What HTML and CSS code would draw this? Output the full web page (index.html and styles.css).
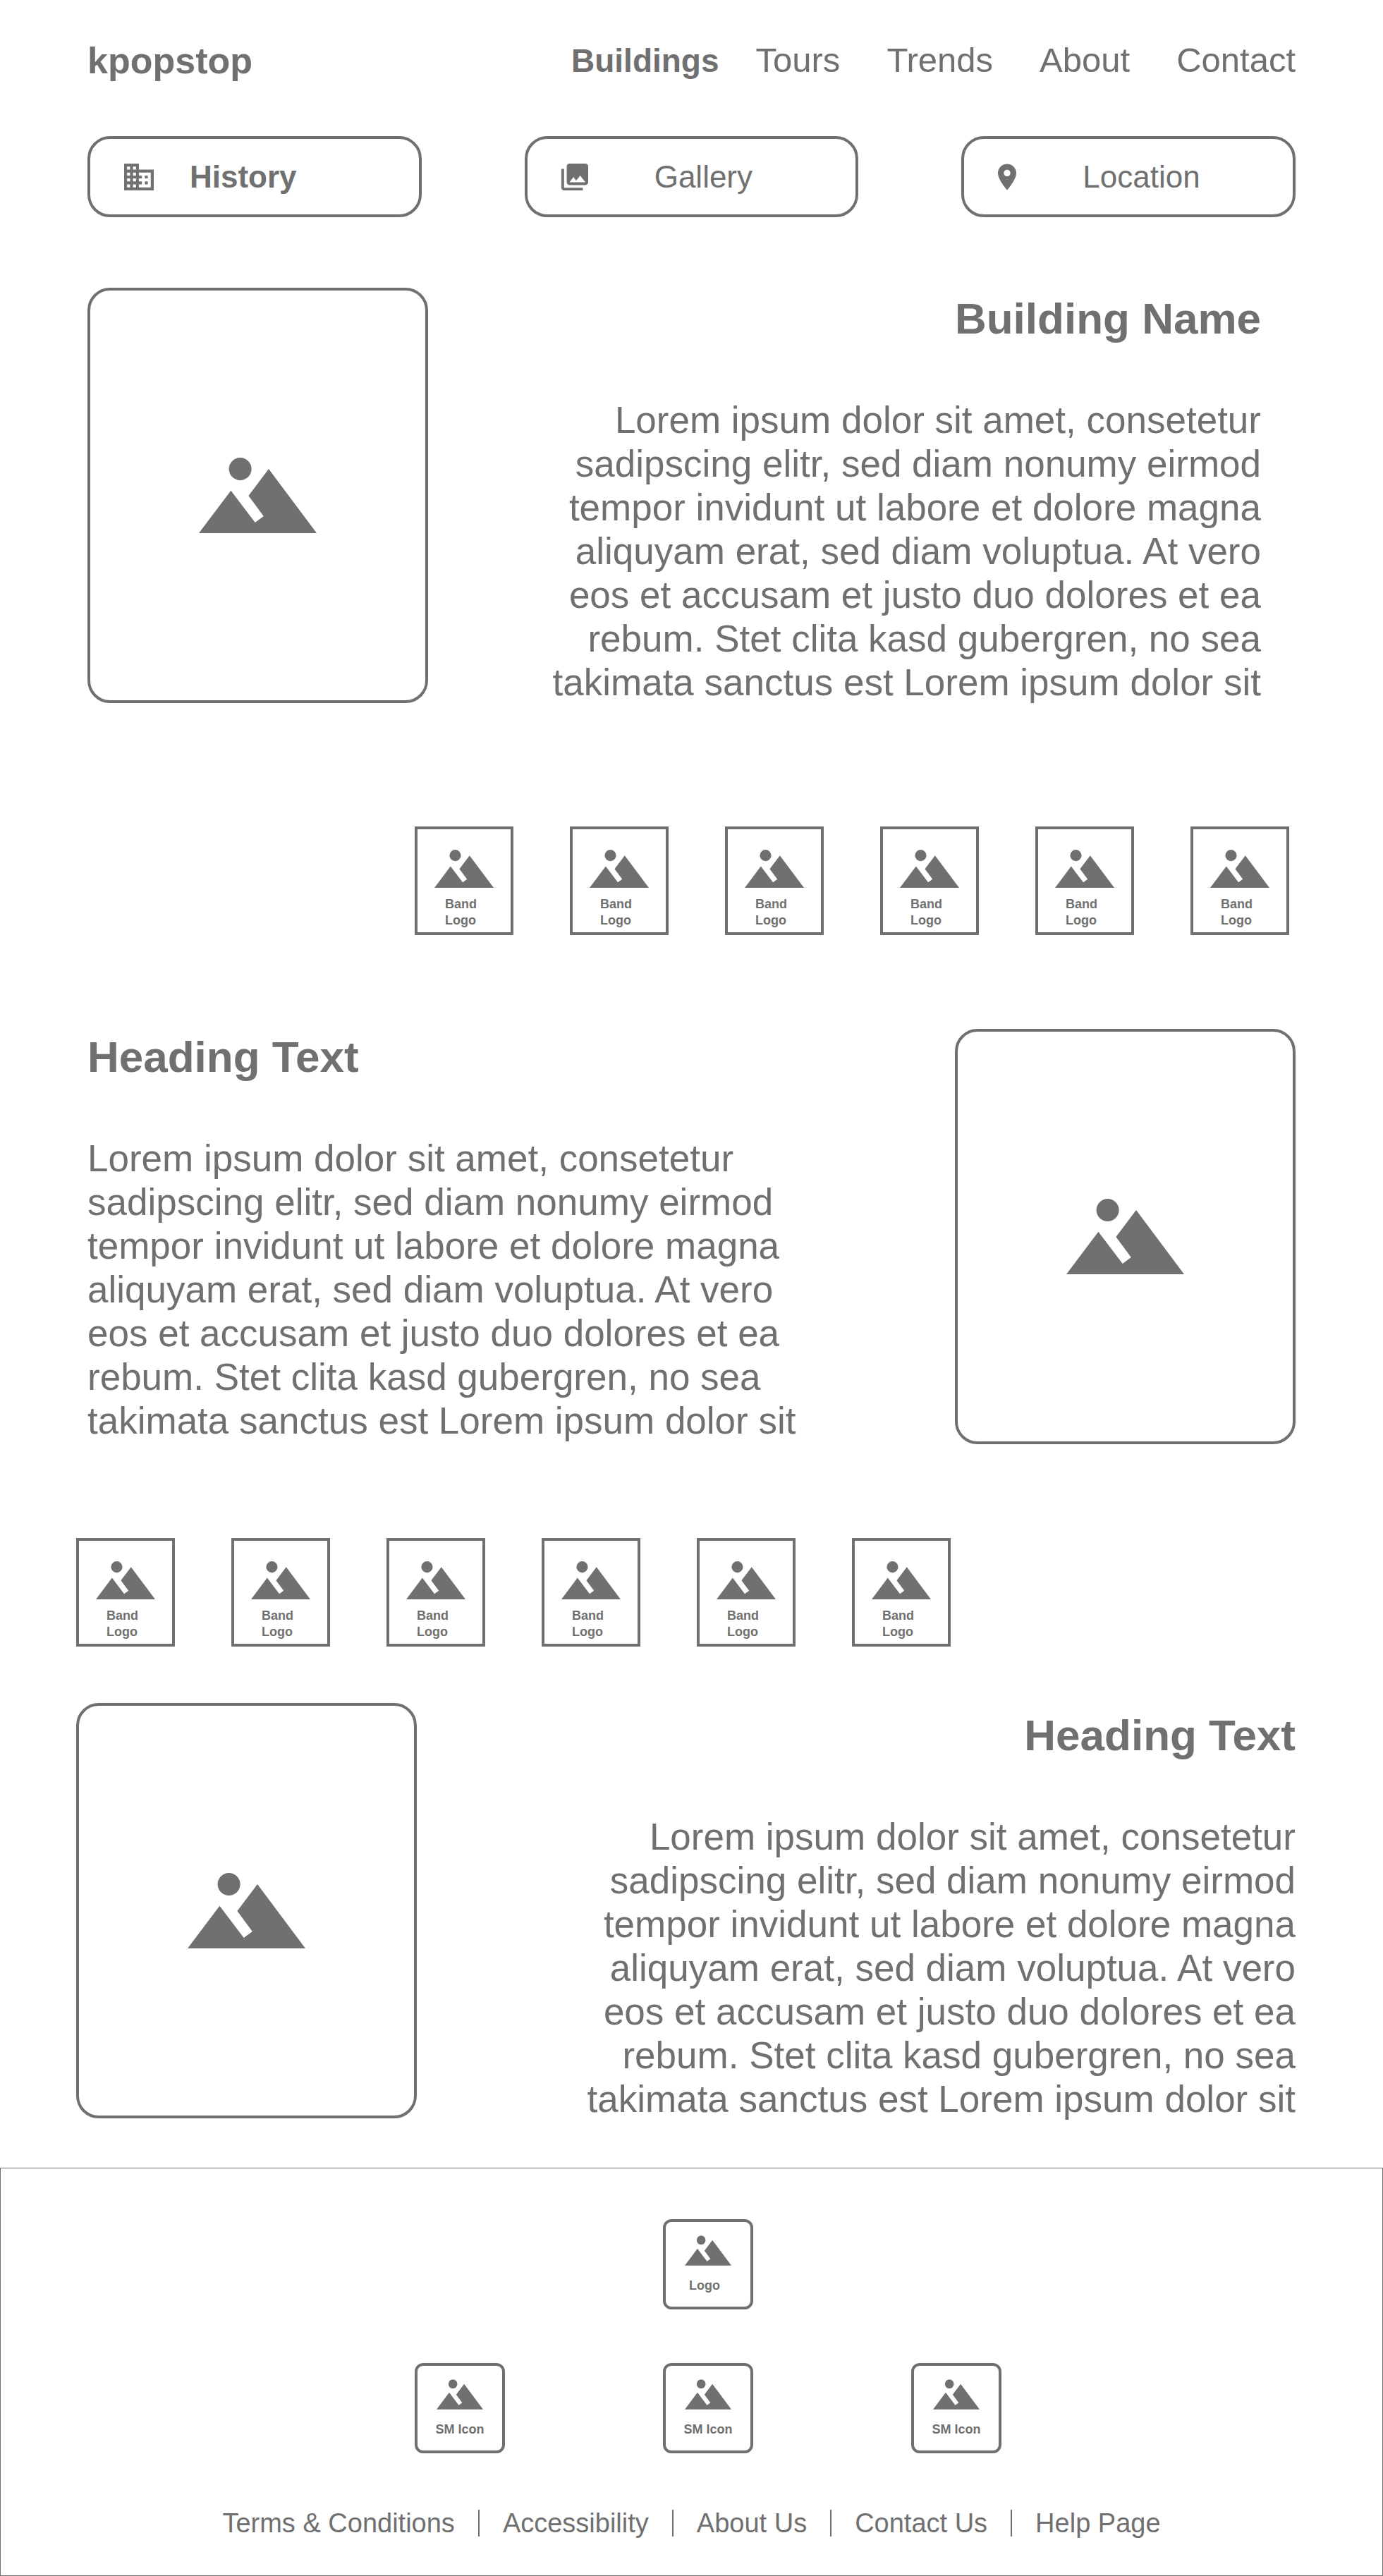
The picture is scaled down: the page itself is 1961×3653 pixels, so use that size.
FILE: index.html
```html
<!DOCTYPE html>
<html lang="en">
<head>
<meta charset="utf-8">
<meta name="viewport" content="width=device-width, initial-scale=1">
<title>kpopstop – Buildings</title>
<link rel="stylesheet" href="styles.css">
</head>
<body>
<svg class="sprite" aria-hidden="true">
  <symbol id="picture" viewBox="0 0 167 107">
    <circle cx="58.6" cy="16" r="16"/>
    <path d="M0 107 45.4 46.7 79.7 92 91.8 83 70.4 54 99 16 167 107Z"/>
  </symbol>
</svg>

<header class="header">
  <a class="brand" href="#">kpopstop</a>
  <nav class="nav" aria-label="Main">
    <a class="nav-link nav-link--active" href="#" aria-current="page">Buildings</a>
    <a class="nav-link" href="#">Tours</a>
    <a class="nav-link" href="#">Trends</a>
    <a class="nav-link" href="#">About</a>
    <a class="nav-link" href="#">Contact</a>
  </nav>
</header>

<nav class="tabs" aria-label="Building">
  <a class="tab tab--active" href="#" aria-current="page">
    <svg class="tab-icon" width="42" height="38" viewBox="2 3 20 18" aria-hidden="true"><path d="M12 7V3H2v18h20V7H12zM6 19H4v-2h2v2zm0-4H4v-2h2v2zm0-4H4V9h2v2zm0-4H4V5h2v2zm4 12H8v-2h2v2zm0-4H8v-2h2v2zm0-4H8V9h2v2zm0-4H8V5h2v2zm10 12h-8v-2h2v-2h-2v-2h2v-2h-2V9h8v10zm-2-8h-2v2h2v-2zm0 4h-2v2h2v-2z"/></svg>
    <span>History</span>
  </a>
  <a class="tab" href="#">
    <svg class="tab-icon" width="38" height="38" viewBox="2 2 20 20" aria-hidden="true"><path d="M22 16V4c0-1.1-.9-2-2-2H8c-1.1 0-2 .9-2 2v12c0 1.1.9 2 2 2h12c1.1 0 2-.9 2-2zm-11-4l2.03 2.71L16 11l4 5H8l3-4zM2 6v14c0 1.1.9 2 2 2h14v-2H4V6H2z"/></svg>
    <span>Gallery</span>
  </a>
  <a class="tab" href="#">
    <svg class="tab-icon" width="26" height="38" viewBox="5 2 14 20" aria-hidden="true"><path d="M12 2C8.13 2 5 5.13 5 9c0 5.25 7 13 7 13s7-7.75 7-13c0-3.87-3.13-7-7-7zm0 9.5c-1.38 0-2.5-1.12-2.5-2.5s1.12-2.5 2.5-2.5 2.5 1.12 2.5 2.5-1.12 2.5-2.5 2.5z"/></svg>
    <span>Location</span>
  </a>
</nav>

<main>
  <section class="story story--lead">
    <div class="photo"><svg class="photo-icon" role="img" aria-label="Building photo"><use href="#picture"/></svg></div>
    <div class="copy copy--right">
      <h1 class="title">Building Name</h1>
      <p class="text">Lorem ipsum dolor sit amet, consetetur sadipscing elitr, sed diam nonumy eirmod tempor invidunt ut labore et dolore magna aliquyam erat, sed diam voluptua. At vero eos et accusam et justo duo dolores et ea rebum. Stet clita kasd gubergren, no sea takimata sanctus est Lorem ipsum dolor sit</p>
    </div>
  </section>

  <div class="bands bands--end">
    <div class="band"><svg class="band-icon" aria-hidden="true"><use href="#picture"/></svg><p class="band-name">Band<br>Logo</p></div>
    <div class="band"><svg class="band-icon" aria-hidden="true"><use href="#picture"/></svg><p class="band-name">Band<br>Logo</p></div>
    <div class="band"><svg class="band-icon" aria-hidden="true"><use href="#picture"/></svg><p class="band-name">Band<br>Logo</p></div>
    <div class="band"><svg class="band-icon" aria-hidden="true"><use href="#picture"/></svg><p class="band-name">Band<br>Logo</p></div>
    <div class="band"><svg class="band-icon" aria-hidden="true"><use href="#picture"/></svg><p class="band-name">Band<br>Logo</p></div>
    <div class="band"><svg class="band-icon" aria-hidden="true"><use href="#picture"/></svg><p class="band-name">Band<br>Logo</p></div>
  </div>

  <section class="story">
    <div class="copy">
      <h2 class="title">Heading Text</h2>
      <p class="text">Lorem ipsum dolor sit amet, consetetur sadipscing elitr, sed diam nonumy eirmod tempor invidunt ut labore et dolore magna aliquyam erat, sed diam voluptua. At vero eos et accusam et justo duo dolores et ea rebum. Stet clita kasd gubergren, no sea takimata sanctus est Lorem ipsum dolor sit</p>
    </div>
    <div class="photo"><svg class="photo-icon" role="img" aria-label="Photo"><use href="#picture"/></svg></div>
  </section>

  <div class="bands">
    <div class="band"><svg class="band-icon" aria-hidden="true"><use href="#picture"/></svg><p class="band-name">Band<br>Logo</p></div>
    <div class="band"><svg class="band-icon" aria-hidden="true"><use href="#picture"/></svg><p class="band-name">Band<br>Logo</p></div>
    <div class="band"><svg class="band-icon" aria-hidden="true"><use href="#picture"/></svg><p class="band-name">Band<br>Logo</p></div>
    <div class="band"><svg class="band-icon" aria-hidden="true"><use href="#picture"/></svg><p class="band-name">Band<br>Logo</p></div>
    <div class="band"><svg class="band-icon" aria-hidden="true"><use href="#picture"/></svg><p class="band-name">Band<br>Logo</p></div>
    <div class="band"><svg class="band-icon" aria-hidden="true"><use href="#picture"/></svg><p class="band-name">Band<br>Logo</p></div>
  </div>

  <section class="story story--last">
    <div class="photo"><svg class="photo-icon" role="img" aria-label="Photo"><use href="#picture"/></svg></div>
    <div class="copy copy--right">
      <h2 class="title">Heading Text</h2>
      <p class="text">Lorem ipsum dolor sit amet, consetetur sadipscing elitr, sed diam nonumy eirmod tempor invidunt ut labore et dolore magna aliquyam erat, sed diam voluptua. At vero eos et accusam et justo duo dolores et ea rebum. Stet clita kasd gubergren, no sea takimata sanctus est Lorem ipsum dolor sit</p>
    </div>
  </section>
</main>

<footer class="footer">
  <div class="badges">
    <a class="badge badge--logo" href="#"><svg class="badge-icon" aria-hidden="true"><use href="#picture"/></svg><span>Logo</span></a>
  </div>
  <div class="badges">
    <a class="badge" href="#"><svg class="badge-icon" aria-hidden="true"><use href="#picture"/></svg><span>SM Icon</span></a>
    <a class="badge" href="#"><svg class="badge-icon" aria-hidden="true"><use href="#picture"/></svg><span>SM Icon</span></a>
    <a class="badge" href="#"><svg class="badge-icon" aria-hidden="true"><use href="#picture"/></svg><span>SM Icon</span></a>
  </div>
  <nav class="legal" aria-label="Footer">
    <a href="#">Terms &amp; Conditions</a>
    <span class="divider"></span>
    <a href="#">Accessibility</a>
    <span class="divider"></span>
    <a href="#">About Us</a>
    <span class="divider"></span>
    <a href="#">Contact Us</a>
    <span class="divider"></span>
    <a href="#">Help Page</a>
  </nav>
</footer>
</body>
</html>
```

FILE: styles.css
```css
:root {
  --ink: #707070;
  --edge: 124px;
  --edge-wide: 108px;
}

* {
  box-sizing: border-box;
}

body {
  margin: 0;
  background: #fff;
  color: var(--ink);
  font-family: "Liberation Sans", Arial, Helvetica, sans-serif;
}

a {
  color: inherit;
  text-decoration: none;
}

svg {
  display: block;
  flex: none;
  fill: currentColor;
}

.sprite {
  display: none;
}

/* Header */

.header {
  display: flex;
  align-items: center;
  justify-content: space-between;
  padding: 55px var(--edge) 0;
  line-height: 60px;
}

.brand {
  font-size: 52px;
  font-weight: 700;
}

.nav {
  display: flex;
  align-items: baseline;
  gap: 66px;
  font-size: 49px;
}

.nav-link--active {
  margin-right: -14px;
  font-size: 46px;
  font-weight: 700;
}

/* Section tabs */

.tabs {
  display: grid;
  grid-template-columns: repeat(3, 1fr);
  gap: 146px;
  padding: 77px var(--edge) 0;
}

.tab {
  display: flex;
  align-items: center;
  gap: 94px;
  height: 115px;
  padding-left: 48px;
  border: 4px solid var(--ink);
  border-radius: 32px;
  font-size: 44px;
}

.tab--active {
  gap: 51px;
  font-weight: 700;
}

/* Photo and text */

.story {
  display: flex;
  align-items: flex-start;
  justify-content: space-between;
  padding: 0 var(--edge);
}

.story--lead {
  padding: 100px 173px 0 var(--edge);
}

.story--last {
  padding: 0 var(--edge) 66px var(--edge-wide);
}

.photo {
  display: flex;
  flex: none;
  align-items: center;
  justify-content: center;
  width: 483px;
  height: 589px;
  border: 4px solid var(--ink);
  border-radius: 32px;
}

.photo-icon {
  width: 167px;
  height: 107px;
}

.copy {
  flex: 0 1 1010px;
  padding-top: 4px;
}

.copy--right {
  padding-top: 8px;
  text-align: right;
}

.story--last .copy {
  padding-top: 10px;
}

.title {
  margin: 0 0 77px;
  font-size: 62px;
  line-height: 72px;
}

.text {
  margin: 0;
  font-size: 53px;
  line-height: 62px;
}

/* Band logos */

.bands {
  display: flex;
  gap: 80px;
  padding: 133px var(--edge-wide) 80px;
}

.bands--end {
  justify-content: flex-end;
  padding: 173px 133px 133px;
}

.band {
  width: 140px;
  height: 154px;
  padding: 29px 24px 0;
  border: 4px solid var(--ink);
}

.band-icon {
  width: 84px;
  height: 54px;
}

.band-name {
  margin: 12px 0 0;
  padding-left: 15px;
  font-size: 18px;
  font-weight: 700;
  line-height: 23px;
}

/* Footer */

.footer {
  display: flex;
  flex-direction: column;
  gap: 76px;
  padding: 72px 0 51px;
  border: 1px solid var(--ink);
}

.badges {
  display: flex;
  justify-content: center;
  gap: 224px;
  padding-left: 47px;
}

.badge {
  display: flex;
  flex-direction: column;
  align-items: center;
  gap: 17px;
  width: 128px;
  height: 128px;
  padding-top: 19px;
  border: 4px solid var(--ink);
  border-radius: 12px;
  font-size: 18px;
  font-weight: 700;
  line-height: 23px;
}

.badge--logo span {
  padding-right: 10px;
}

.badge-icon {
  width: 66px;
  height: 43px;
}

.legal {
  display: flex;
  align-items: center;
  justify-content: center;
  gap: 33px;
  font-size: 38px;
  line-height: 46px;
}

.divider {
  width: 2px;
  height: 38px;
  background: var(--ink);
}
```
